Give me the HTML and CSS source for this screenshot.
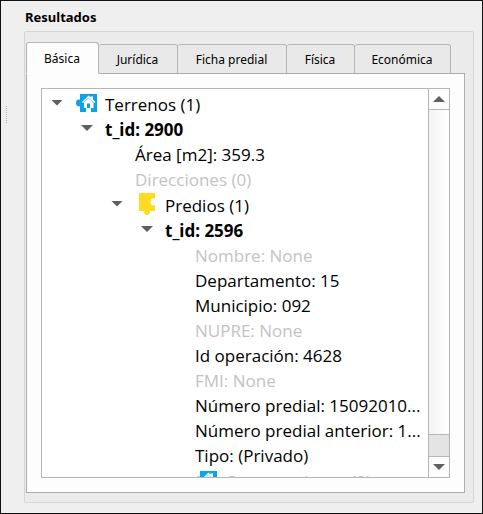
FILE: index.html
```html
<!DOCTYPE html>
<html lang="es">
<head>
<meta charset="utf-8">
<title>Resultados</title>
<link rel="stylesheet" href="styles.css">
</head>
<body>
<svg class="symbols" aria-hidden="true">
  <symbol id="house" viewBox="0 0 22 18">
    <path fill="#0ba4e8" d="M5 0h17v18h-6v-2.500a2.500 2.500 0 0 0-5 0V18H5v-6C3.500 13 1 12.500 1 9s2.500-4 4-3z"/>
    <path fill="#fff" d="M13.500 1.500l2 1.800V2.500h2.500v3L20.500 8l-1 1-1-.8V14h-3.500v2.500h-3V14H9V8.200L8 9 7 8z"/>
    <path fill="none" stroke="#7dcdf2" d="M8.500 8.500L13.500 4l5 4.500"/>
    <path fill="#0ba4e8" d="M12 9.500h3V14h-3z"/>
  </symbol>
  <symbol id="piece" viewBox="0 0 18 22">
    <path fill="#ffdb20" d="M1 0h16v5.500c-2-1-4.500 0-4.500 3.500s2.500 4 4.500 3v6h-5.500c1 2-.5 4-2.500 4s-3.500-2-2.500-4H1z"/>
  </symbol>
</svg>
<main class="window">
  <span class="grip"></span>
  <h1 class="title">Resultados</h1>
  <section class="group">
    <div class="tabs" role="tablist">
      <button class="tab active" role="tab" aria-selected="true">Básica</button>
      <button class="tab" role="tab">Jurídica</button>
      <button class="tab" role="tab">Ficha predial</button>
      <button class="tab" role="tab">Física</button>
      <button class="tab" role="tab">Económica</button>
    </div>
    <div class="pane" role="tabpanel">
      <div class="view">
        <ul class="tree" role="tree">
          <li><div class="row tall"><i class="arrow"></i><svg class="icon house"><use href="#house"/></svg>Terrenos (1)</div>
            <ul>
              <li><div class="row bold"><i class="arrow"></i>t_id: 2900</div>
                <ul>
                  <li><div class="row leaf">Área [m2]: 359.3</div></li>
                  <li><div class="row leaf muted">Direcciones (0)</div></li>
                  <li><div class="row tall"><i class="arrow"></i><svg class="icon piece"><use href="#piece"/></svg>Predios (1)</div>
                    <ul>
                      <li><div class="row bold"><i class="arrow"></i>t_id: 2596</div>
                        <ul>
                          <li><div class="row leaf muted">Nombre: None</div></li>
                          <li><div class="row leaf">Departamento: 15</div></li>
                          <li><div class="row leaf">Municipio: 092</div></li>
                          <li><div class="row leaf muted">NUPRE: None</div></li>
                          <li><div class="row leaf">Id operación: 4628</div></li>
                          <li><div class="row leaf muted">FMI: None</div></li>
                          <li><div class="row leaf">Número predial: 15092010...</div></li>
                          <li><div class="row leaf">Número predial anterior: 1...</div></li>
                          <li><div class="row leaf">Tipo: (Privado)</div></li>
                          <li><div class="row tall leaf muted"><svg class="icon house"><use href="#house"/></svg>Construcciones (0)</div></li>
                        </ul>
                      </li>
                    </ul>
                  </li>
                </ul>
              </li>
            </ul>
          </li>
        </ul>
        <div class="scrollbar">
          <button class="step" aria-label="Subir"><i class="arrow up"></i></button>
          <div class="thumb"></div>
          <div class="track"></div>
          <button class="step" aria-label="Bajar"><i class="arrow"></i></button>
        </div>
      </div>
    </div>
  </section>
</main>
</body>
</html>
```
FILE: styles.css
```css
* {
  box-sizing: border-box;
}

body {
  margin: 0;
  color: #000;
  font-family: "Noto Sans", sans-serif;
  font-size: 12px;
}

ul {
  margin: 0;
  padding: 0;
  list-style: none;
}

.symbols {
  position: absolute;
  width: 0;
  height: 0;
}

.window {
  position: relative;
  display: flex;
  flex-direction: column;
  height: 100vh;
  padding: 7px 8px 10px 23px;
  border: 1px solid #111;
  background: #efefef;
}

.grip {
  position: absolute;
  top: 105px;
  left: 5px;
  height: 17px;
  border-left: 1px dotted #b8b8b8;
}

.title {
  margin: 0 0 5px 1px;
  font-size: 13px;
  line-height: 18px;
}

.group {
  display: flex;
  flex: 1;
  flex-direction: column;
  min-height: 0;
  padding: 10px 8px 9px 1px;
  border: 1px solid #d5d5d5;
  border-radius: 2px;
  background: #ebebeb;
}

.tabs {
  display: grid;
  grid-template-columns: 73fr 79fr 109fr 68fr 96fr;
  align-items: end;
  height: 32px;
  margin-right: 14px;
  margin-bottom: -1px;
}

.tab {
  height: 30px;
  padding: 0 1px 0 0;
  border: 1px solid #b5b5b5;
  border-left: 0;
  border-radius: 3px 3px 0 0;
  background: #e9e9e9;
  color: #000;
  font: inherit;
  white-space: nowrap;
}

.tab.active {
  z-index: 1;
  height: 32px;
  border-left: 1px solid #b0b0b0;
  border-bottom-color: #fdfdfd;
  background: #fdfdfd;
}

.pane {
  display: flex;
  flex: 1;
  min-height: 0;
  padding: 14px;
  border: 1px solid #adadad;
  background: #fdfdfd;
}

.view {
  display: flex;
  flex: 1;
  min-width: 0;
  overflow: hidden;
  border: 1px solid #b5b5b5;
  background: #fff;
}

.tree {
  flex: 1;
  min-width: 0;
  padding-top: 2px;
  font-family: "Open Sans", sans-serif;
  font-size: 17px;
}

.tree ul {
  padding-left: 30px;
}

.row {
  display: flex;
  align-items: center;
  height: 25px;
  padding-left: 9px;
  white-space: nowrap;
}

.row.tall {
  height: 26px;
}

.row.leaf {
  padding-left: 33px;
}

.bold {
  font-family: "Noto Sans", sans-serif;
  font-weight: 700;
}

.muted {
  color: #c3c3c3;
}

.arrow {
  flex: none;
  width: 12px;
  height: 6px;
  background: #5f5f5f;
  clip-path: polygon(0 0, 100% 0, 50% 100%);
}

.row .arrow {
  margin: 0 12px 3px 0;
}

.arrow.up {
  clip-path: polygon(50% 0, 100% 100%, 0 100%);
}

.icon {
  flex: none;
}

.house {
  width: 22px;
  height: 18px;
  margin: 0 8px 2px 0;
}

.piece {
  width: 18px;
  height: 22px;
  margin: 0 9px 2px 3px;
}

.scrollbar {
  display: flex;
  flex: none;
  flex-direction: column;
  width: 21px;
  border-left: 1px solid #b5b5b5;
  background: #e4e4e4;
}

.step {
  display: flex;
  align-items: center;
  justify-content: center;
  height: 20px;
  padding: 0;
  border: 0;
  background: #fcfcfc;
}

.thumb {
  flex: 1;
  border: solid #b5b5b5;
  border-width: 1px 0;
  background: linear-gradient(90deg, #f3f3f3, #fff);
}

.track {
  height: 22px;
  border-bottom: 1px solid #b5b5b5;
}
```
